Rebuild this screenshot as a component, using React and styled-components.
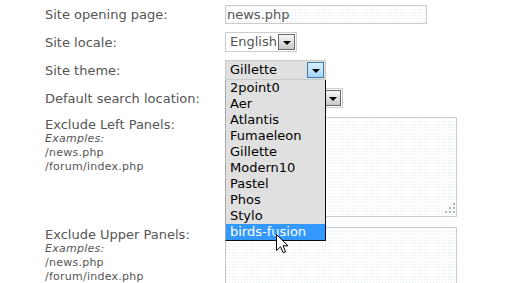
import React from "react";
import styled, { createGlobalStyle, css } from "styled-components";

const GlobalStyle = createGlobalStyle`
  html, body { margin: 0; padding: 0; background: #ffffff; }
  body { font-family: "DejaVu Sans", Verdana, sans-serif; }
`;

const dotted = css`
  background-color: #ffffff;
  background-image: linear-gradient(90deg, transparent 1px, #ffffff 1px),
    linear-gradient(180deg, #dcefef 1px, #ffffff 1px);
  background-size: 3px 3px, 3px 3px;
`;

const Form = styled.div`
  display: flex;
  flex-direction: column;
  gap: 8px;
  padding: 4px 0 0 45px;
  width: 474px;
  height: 279px;
  overflow: hidden;
`;

const Row = styled.div`
  flex-shrink: 0;
  position: relative;
  z-index: ${(p) => (p.$raised ? 5 : "auto")};
  display: grid;
  grid-template-columns: 180px auto;
  align-items: ${(p) => (p.$tall ? "start" : "center")};
  padding: ${(p) => (p.$tall ? "1px 0" : "0")};
  min-height: 20px;
`;

const LabelCell = styled.div`
  display: flex;
  flex-direction: column;
`;

const Label = styled.span`
  color: #555555;
  font-size: 13px;
  line-height: 15px;
  white-space: nowrap;
`;

const Hint = styled.span`
  color: #555555;
  font-size: 11px;
  line-height: 14px;
  letter-spacing: 0.25px;
  font-style: ${(p) => (p.$italic ? "italic" : "normal")};
  white-space: nowrap;
`;

const TextInput = styled.div`
  box-sizing: border-box;
  width: 202px;
  height: 19px;
  border: 1px solid #cccccc;
  ${dotted};
  color: #555555;
  font-size: 13px;
  line-height: 17px;
  padding-left: 1px;
`;

const SelectBox = styled.div`
  position: relative;
  box-sizing: border-box;
  display: flex;
  align-items: center;
  width: ${(p) => p.$width}px;
  height: 20px;
  border: 1px solid #cccccc;
  background: ${(p) => (p.$open ? "#e0e0e0" : "#ffffff")};
  color: ${(p) => (p.$open ? "#000000" : "#555555")};
  font-size: 13px;
  padding: 0 1px 0 4px;
`;

const SelectValue = styled.span`
  flex: 1;
  line-height: 16px;
  white-space: nowrap;
  overflow: hidden;
`;

const ArrowButton = styled.span`
  box-sizing: border-box;
  width: 17px;
  height: 16px;
  display: flex;
  align-items: center;
  justify-content: center;
  border: 1px solid ${(p) => (p.$hot ? "#3d7bad" : "#6e6470")};
  background: ${(p) =>
    p.$hot
      ? "linear-gradient(#d9efff, #a8d6f7)"
      : "linear-gradient(#f7f7f7, #c9c9c9)"};
  &::after {
    content: "";
    width: 0;
    height: 0;
    border-left: 4px solid transparent;
    border-right: 4px solid transparent;
    border-top: 4px solid #000000;
    margin-top: 1px;
  }
`;

const ListBox = styled.ul`
  position: absolute;
  top: 19px;
  left: -1px;
  z-index: 10;
  box-sizing: border-box;
  width: 101px;
  margin: 0;
  padding: 0;
  list-style: none;
  background: #e0e0e0;
  border-left: 1px solid #a9a9a9;
  border-right: 1px solid #140814;
  border-bottom: 1px solid #140814;
`;

const Option = styled.li`
  position: relative;
  height: 16px;
  line-height: 16px;
  padding-left: 4px;
  font-size: 13px;
  color: ${(p) => (p.$active ? "#ffffff" : "#000000")};
  background: ${(p) => (p.$active ? "#3399ff" : "transparent")};
  white-space: nowrap;
`;

const Pointer = styled.svg`
  position: absolute;
  left: 50px;
  top: 10px;
  width: 13px;
  height: 20px;
`;

const AreaWrap = styled.div`
  position: relative;
  width: 232px;
  height: 100px;
`;

const TextArea = styled.div`
  box-sizing: border-box;
  width: 100%;
  height: 100%;
  border: 1px solid #cccccc;
  ${dotted};
`;

const Grip = styled.svg`
  position: absolute;
  right: 1px;
  bottom: 3px;
  width: 11px;
  height: 11px;
`;

const themes = [
  "2point0",
  "Aer",
  "Atlantis",
  "Fumaeleon",
  "Gillette",
  "Modern10",
  "Pastel",
  "Phos",
  "Stylo",
  "birds-fusion",
];

function Examples() {
  return (
    <>
      <Hint $italic>Examples:</Hint>
      <Hint>/news.php</Hint>
      <Hint>/forum/index.php</Hint>
    </>
  );
}

export default function App() {
  return (
    <>
      <GlobalStyle />
      <Form>
        <Row>
          <Label>Site opening page:</Label>
          <TextInput>news.php</TextInput>
        </Row>
        <Row>
          <Label>Site locale:</Label>
          <SelectBox $width={72}>
            <SelectValue>English</SelectValue>
            <ArrowButton />
          </SelectBox>
        </Row>
        <Row $raised>
          <Label>Site theme:</Label>
          <SelectBox $width={101} $open>
            <SelectValue>Gillette</SelectValue>
            <ArrowButton $hot />
            <ListBox>
              {themes.map((t) => (
                <Option key={t} $active={t === "birds-fusion"}>
                  {t}
                  {t === "birds-fusion" && (
                    <Pointer viewBox="0 0 13 20">
                      <path
                        d="M0.5 0.5 L0.5 16.5 L4.5 12.8 L7.2 18.8 L9.6 17.8 L7 11.8 L12 11.8 Z"
                        fill="#ffffff"
                        stroke="#000000"
                        strokeWidth="1"
                        strokeLinejoin="miter"
                      />
                    </Pointer>
                  )}
                </Option>
              ))}
            </ListBox>
          </SelectBox>
        </Row>
        <Row>
          <Label>Default search location:</Label>
          <SelectBox $width={118}>
            <SelectValue />
            <ArrowButton />
          </SelectBox>
        </Row>
        <Row $tall>
          <LabelCell>
            <Label>Exclude Left Panels:</Label>
            <Examples />
          </LabelCell>
          <AreaWrap>
            <TextArea />
            <Grip viewBox="0 0 11 11">
              <g fill="#b4b4b4">
                <rect x="8" y="0" width="2" height="2" />
                <rect x="4" y="4" width="2" height="2" />
                <rect x="8" y="4" width="2" height="2" />
                <rect x="0" y="8" width="2" height="2" />
                <rect x="4" y="8" width="2" height="2" />
                <rect x="8" y="8" width="2" height="2" />
              </g>
              <g fill="#e6e6e6">
                <rect x="10" y="2" width="1" height="1" />
                <rect x="6" y="6" width="1" height="1" />
                <rect x="10" y="6" width="1" height="1" />
                <rect x="2" y="10" width="1" height="1" />
                <rect x="6" y="10" width="1" height="1" />
                <rect x="10" y="10" width="1" height="1" />
              </g>
            </Grip>
          </AreaWrap>
        </Row>
        <Row $tall>
          <LabelCell>
            <Label>Exclude Upper Panels:</Label>
            <Examples />
          </LabelCell>
          <AreaWrap>
            <TextArea />
          </AreaWrap>
        </Row>
      </Form>
    </>
  );
}
